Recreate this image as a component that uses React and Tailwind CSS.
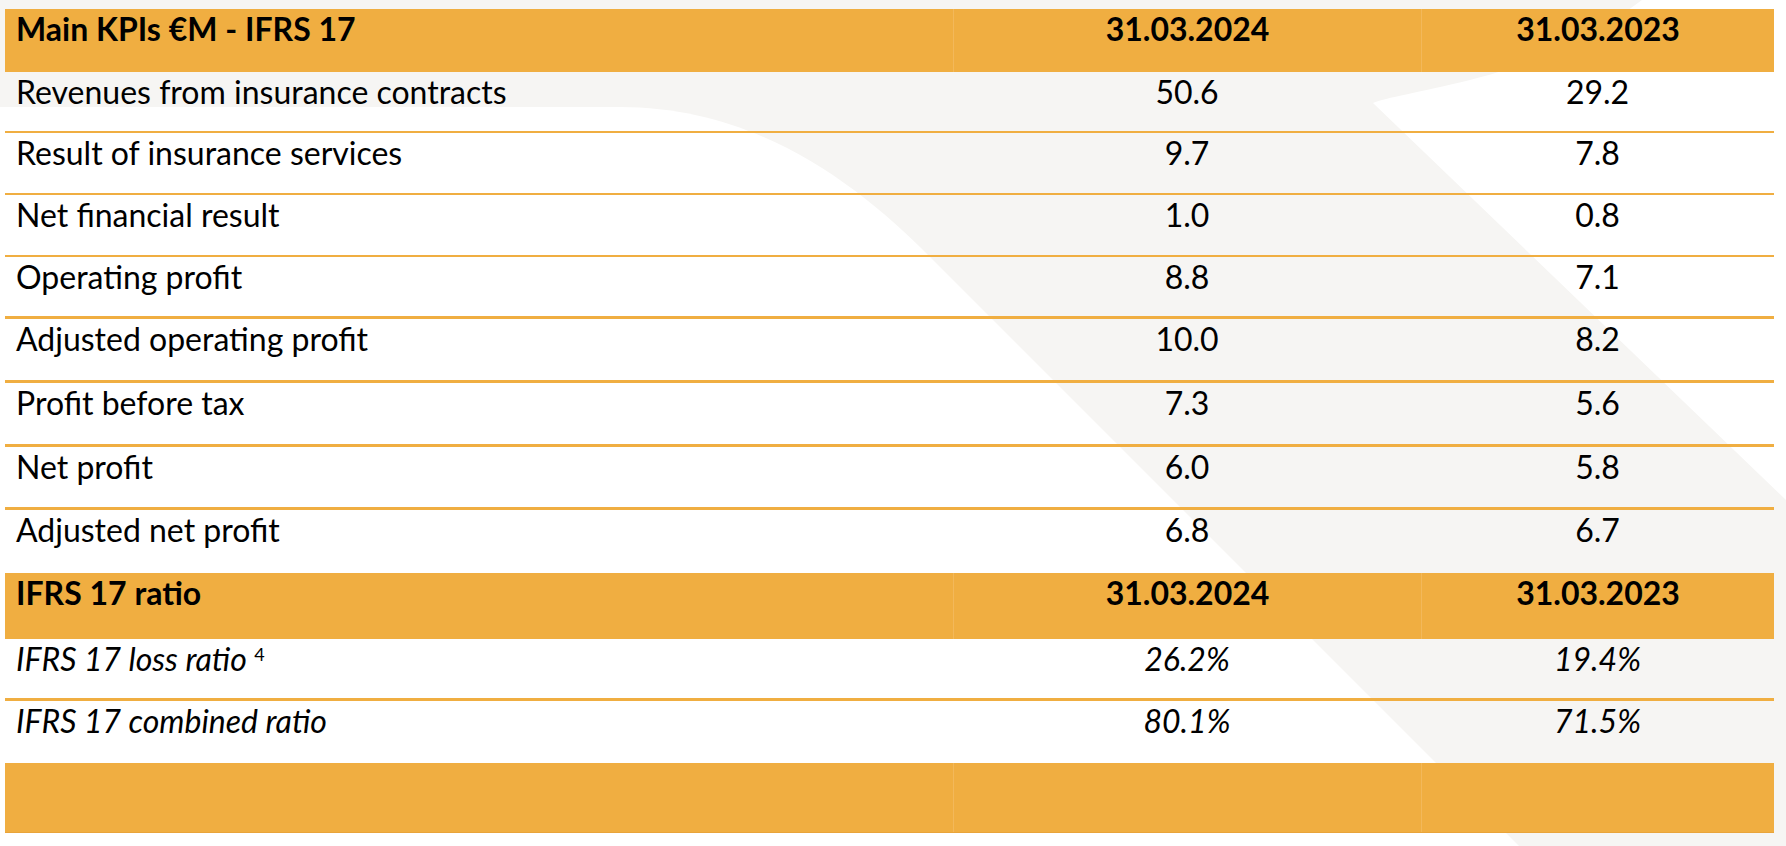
import React from "react";

const ORANGE = "bg-[#f0ae41]";

const dataRows = [
  { label: "Revenues from insurance contracts", a: "50.6", b: "29.2", h: "h-[61px]", bw: "border-b-2" },
  { label: "Result of insurance services", a: "9.7", b: "7.8", h: "h-[62px]", bw: "border-b-2" },
  { label: "Net financial result", a: "1.0", b: "0.8", h: "h-[62px]", bw: "border-b-2" },
  { label: "Operating profit", a: "8.8", b: "7.1", h: "h-[62px]", bw: "border-b-[3px]" },
  { label: "Adjusted operating profit", a: "10.0", b: "8.2", h: "h-[64px]", bw: "border-b-[3px]" },
  { label: "Profit before tax", a: "7.3", b: "5.6", h: "h-[64px]", bw: "border-b-[3px]" },
  { label: "Net profit", a: "6.0", b: "5.8", h: "h-[63px]", bw: "border-b-[3px]" },
  { label: "Adjusted net profit", a: "6.8", b: "6.7", h: "h-[63px]", bw: "border-b-0" },
];

function HeaderRow({ label, h }) {
  return (
    <div className={`grid grid-cols-[948px_468px_353px] ${h} ${ORANGE} font-bold`}>
      <div className="pl-[11px] pt-[1px]">{label}</div>
      <div className="text-center pt-[1px] border-l border-[#f3b85a]">31.03.2024</div>
      <div className="text-center pt-[1px] border-l border-[#f3b85a]">31.03.2023</div>
    </div>
  );
}

function DataRow({ label, a, b, h, bw, italic }) {
  return (
    <div className={`grid grid-cols-[948px_468px_353px] ${h} ${bw} border-[#f0ae41] ${italic ? "italic" : ""}`}>
      <div className="pl-[11px] pt-[1px]">{label}</div>
      <div className="text-center pt-[1px]">{a}</div>
      <div className="text-center pt-[1px]">{b}</div>
    </div>
  );
}

export default function App() {
  return (
    <div className="relative w-[1786px] h-[846px] overflow-hidden bg-[#f6f5f3] font-[Lato,sans-serif] text-[32px] leading-[38px] text-black">
      <svg className="absolute inset-0" width="1786" height="846" viewBox="0 0 1786 846">
        <path d="M0 107 L620 107 C760 107 860 187 930 257 L1519 846 L0 846 Z" fill="#ffffff" />
        <path d="M1642 0 C1590 40 1520 68 1470 80 C1420 92 1385 98 1373 103 L1786 500 L1786 0 Z" fill="#ffffff" />
      </svg>
      <div className="relative ml-[5px] pt-[9px] w-[1769px]">
        <HeaderRow label="Main KPIs €M - IFRS 17" h="h-[63px]" />
        {dataRows.map((r) => (
          <DataRow key={r.label} {...r} />
        ))}
        <HeaderRow label="IFRS 17 ratio" h="h-[66px]" />
        <DataRow
          italic
          label={
            <>
              IFRS 17 loss ratio{" "}
              <span className="relative -top-[10px] text-[18px] leading-none not-italic">4</span>
            </>
          }
          a="26.2%"
          b="19.4%"
          h="h-[62px]"
          bw="border-b-[3px]"
        />
        <DataRow italic label="IFRS 17 combined ratio" a="80.1%" b="71.5%" h="h-[62px]" bw="border-b-0" />
        <div className={`grid grid-cols-[948px_468px_353px] h-[70px] ${ORANGE} border-b border-[#e9a43a]`}>
          <div />
          <div className="border-l border-[#f3b85a]" />
          <div className="border-l border-[#f3b85a]" />
        </div>
      </div>
    </div>
  );
}
